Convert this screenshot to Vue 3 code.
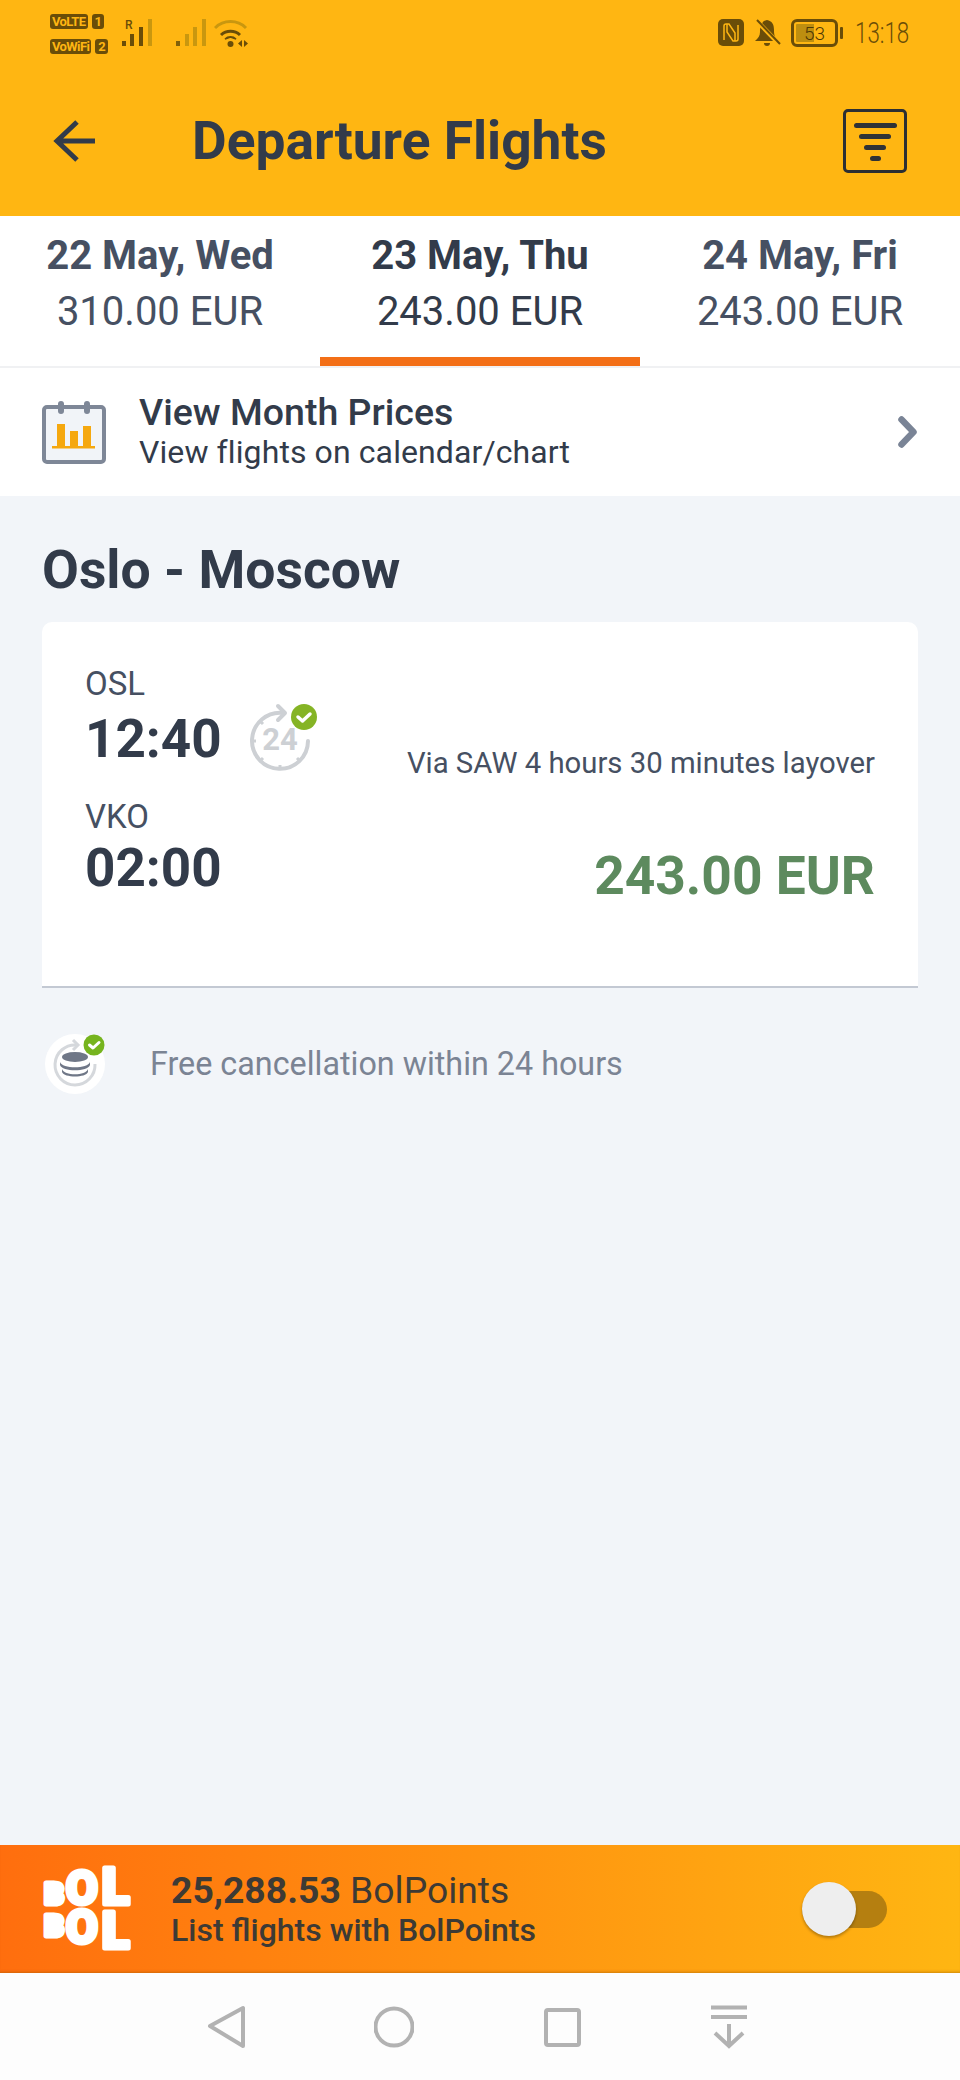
<script setup>
const tabs = [
  { date: '22 May, Wed', price: '310.00 EUR', active: false },
  { date: '23 May, Thu', price: '243.00 EUR', active: true },
  { date: '24 May, Fri', price: '243.00 EUR', active: false },
]
const ticks = [
  [4, 40, 8, 40], [32, 64, 32, 68], [12, 60, 15, 57], [52, 60, 49, 57], [12, 20, 15, 23],
]
</script>

<template>
  <div class="app">
    <header class="top">
      <div class="status">
        <div class="net-labels">
          <div class="net-row"><span class="chip">VoLTE</span><span class="chip num">1</span></div>
          <div class="net-row"><span class="chip">VoWiFi</span><span class="chip num">2</span></div>
        </div>
        <div class="signal first">
          <span class="roam">R</span>
          <svg width="30" height="28" viewBox="0 0 30 28">
            <rect x="0" y="22" width="4" height="5" fill="#6a4d08" />
            <rect x="8" y="15" width="4" height="12" fill="#6a4d08" />
            <rect x="17" y="8" width="4" height="19" fill="#6a4d08" />
            <rect x="26" y="0" width="4" height="27" fill="#c9970f" />
          </svg>
        </div>
        <svg class="signal-two" width="30" height="28" viewBox="0 0 30 28">
          <rect x="0" y="22" width="4" height="5" fill="#80600a" />
          <rect x="9" y="15" width="4" height="12" fill="#c9970f" />
          <rect x="17" y="8" width="4" height="19" fill="#c9970f" />
          <rect x="26" y="0" width="4" height="27" fill="#c9970f" />
        </svg>
        <svg class="wifi" width="36" height="28" viewBox="0 0 36 28">
          <path d="M1 9 A 22 22 0 0 1 32 9" fill="none" stroke="#c9970f" stroke-width="3" />
          <path d="M7 16 A 14 14 0 0 1 26 16" fill="none" stroke="#6a4d08" stroke-width="3" />
          <path d="M11 20 A 8 8 0 0 1 22 20 L 16.500 18 Z" fill="#6a4d08" stroke="#6a4d08" stroke-width="1.500" />
          <circle cx="16.500" cy="25" r="3" fill="#6a4d08" />
          <path d="M28 21 L24 24.500 L28 28 Z M30 21 L34 24.500 L30 28 Z" fill="#6a4d08" />
        </svg>

        <div class="status-right">
          <svg width="26" height="27" viewBox="0 0 26 27">
            <rect x="0" y="0" width="26" height="27" rx="5" fill="#6a4d08" />
            <path d="M6 21 V7 Q6 5 8 5 H11 L17 14 V22 M20 6 V20 Q20 22 18 22 H15 L9 13 V5" fill="none" stroke="#ffb612" stroke-width="1.500" />
          </svg>
          <svg class="bell" width="27" height="28" viewBox="0 0 27 28">
            <path d="M13 1 C 7 2 6 8 6 13 C 6 17 4 19 1 22 H 24 C 20 18 20 14 20 11 C 20 5 18 2 13 1 Z" fill="#6a4d08" />
            <path d="M10 24 H16 A 3 3 0 0 1 10 24 Z" fill="#6a4d08" />
            <path d="M2 1 L26 26" stroke="#ffb612" stroke-width="4.500" />
            <path d="M3 1 L26 25" stroke="#6a4d08" stroke-width="2" />
          </svg>
          <div class="battery"><div class="battery-box"><span>53</span></div><i></i></div>
          <span class="clock">13:18</span>
        </div>
      </div>

      <div class="bar">
        <svg class="back" width="44" height="44" viewBox="0 0 44 44">
          <path d="M42 22 H4 M24 3 L4 22 L24 41" fill="none" stroke="#323b4a" stroke-width="5" />
        </svg>
        <h1>Departure Flights</h1>
        <div class="filter">
          <i class="f1"></i><i class="f2"></i><i class="f3"></i><i class="f4"></i>
        </div>
      </div>
    </header>

    <nav class="tabs">
      <div v-for="t in tabs" :key="t.date" class="tab" :class="{ active: t.active }">
        <div class="tab-date">{{ t.date }}</div>
        <div class="tab-price">{{ t.price }}</div>
      </div>
    </nav>

    <section class="month">
      <svg width="64" height="64" viewBox="0 0 64 64">
        <rect x="2" y="7" width="60" height="55" rx="3" fill="#f1f4f8" stroke="#7e8797" stroke-width="4" />
        <rect x="16" y="1" width="6" height="13" rx="3" fill="#7e8797" />
        <rect x="42" y="1" width="6" height="13" rx="3" fill="#7e8797" />
        <rect x="15" y="24" width="8" height="23" fill="#f5a80f" />
        <rect x="28" y="31" width="8" height="16" fill="#f5a80f" />
        <rect x="41" y="26" width="8" height="21" fill="#f5a80f" />
        <rect x="10" y="46" width="43" height="2.500" fill="#f5a80f" />
      </svg>
      <div class="month-text">
        <div class="month-title">View Month Prices</div>
        <div class="month-sub">View flights on calendar/chart</div>
      </div>
      <svg class="chev" width="20" height="32" viewBox="0 0 20 32">
        <path d="M3.500 3.500 L15.500 16 L3.500 28.500" fill="none" stroke="#7a8496" stroke-width="6.500" stroke-linecap="round" stroke-linejoin="round" />
      </svg>
    </section>

    <main class="main">
      <h2>Oslo - Moscow</h2>
      <article class="card">
        <div class="times">
          <div class="code">OSL</div>
          <div class="time-row">
            <span class="time">12:40</span>
            <svg class="icon24" width="72" height="72" viewBox="0 0 72 72">
              <path d="M35 12 A 28 28 0 1 0 60 40" fill="none" stroke="#cdd0d4" stroke-width="4" stroke-linecap="round" />
              <path d="M30 5 L37 12 L30 19" fill="none" stroke="#cdd0d4" stroke-width="4" stroke-linecap="round" stroke-linejoin="round" />
              <line v-for="(l, i) in ticks" :key="i" :x1="l[0]" :y1="l[1]" :x2="l[2]" :y2="l[3]" stroke="#cdd0d4" stroke-width="3" />
              <text x="32" y="49" text-anchor="middle" class="t24">24</text>
              <circle cx="56" cy="16" r="13" fill="#85b425" />
              <path d="M50 16 L54.500 20 L62 13" fill="none" stroke="#fff" stroke-width="3.500" stroke-linecap="round" stroke-linejoin="round" />
            </svg>
          </div>
          <div class="code code-two">VKO</div>
          <div class="time second">02:00</div>
        </div>
        <div class="fare">
          <div class="via">Via SAW 4 hours 30 minutes layover</div>
          <div class="price">243.00 EUR</div>
        </div>
      </article>

      <div class="free">
        <svg width="64" height="64" viewBox="0 0 64 64">
          <circle cx="31" cy="32" r="30" fill="#fff" />
          <path d="M33 13 A 20 20 0 1 0 51 32" fill="none" stroke="#d5d8dc" stroke-width="3" />
          <path d="M29 8 L34 13 L29 18" fill="none" stroke="#d5d8dc" stroke-width="3" />
          <ellipse cx="31" cy="25" rx="13" ry="5" fill="#6f7787" />
          <path d="M16 30 C 18 37 44 37 46 30 L46 33 C 44 40 18 40 16 33 Z" fill="#6f7787" />
          <path d="M18 37 C 20 44 42 44 44 37 L44 40 C 42 46 20 46 18 40 Z" fill="#6f7787" />
          <circle cx="50" cy="13" r="10.500" fill="#76b41e" />
          <path d="M45.500 13 L49 16 L55 10.500" fill="none" stroke="#fff" stroke-width="3" stroke-linecap="round" stroke-linejoin="round" />
        </svg>
        <span>Free cancellation within 24 hours</span>
      </div>
    </main>

    <section class="points">
      <svg class="logo" width="88" height="86" viewBox="0 0 88 86">
        <text><tspan x="2.500" y="37.500" class="lb">B</tspan><tspan x="24" y="37.500" class="lo">O</tspan><tspan x="60" y="37.500" class="ll">L</tspan></text>
        <text><tspan x="2.500" y="69.500" class="lb">B</tspan><tspan x="24" y="76.500" class="lo">O</tspan><tspan x="60" y="81.500" class="ll">L</tspan></text>
      </svg>
      <div class="points-text">
        <div class="points-amount"><b>25,288.53</b> BolPoints</div>
        <div class="points-sub">List flights with BolPoints</div>
      </div>
      <div class="toggle"><i></i></div>
    </section>

    <footer class="nav">
      <svg width="40" height="46" viewBox="0 0 40 46">
        <path d="M36 4 V42 L3 22 Z" fill="none" stroke="#b2b2b2" stroke-width="4" stroke-linejoin="round" />
      </svg>
      <svg width="40" height="46" viewBox="0 0 40 46">
        <circle cx="20" cy="23" r="18.500" fill="none" stroke="#b2b2b2" stroke-width="4" />
      </svg>
      <svg width="40" height="46" viewBox="0 0 40 46">
        <rect x="5" y="6" width="33" height="35" rx="2" fill="none" stroke="#b2b2b2" stroke-width="4" />
      </svg>
      <svg width="40" height="46" viewBox="0 0 40 46">
        <path d="M3 3.500 H39 M3 13 H39 M21 20 V42 M7 29 L21 42 L35 29" fill="none" stroke="#b2b2b2" stroke-width="4" />
      </svg>
    </footer>
  </div>
</template>

<style scoped>
.app {
  width: 960px;
  height: 2080px;
  display: flex;
  flex-direction: column;
  font-family: Roboto, "Liberation Sans", sans-serif;
  color: #323b4a;
  background: #f2f5f9;
  overflow: hidden;
}
.top {
  height: 216px;
  background: #ffb612;
  flex: none;
}
.status {
  height: 66px;
  display: flex;
  align-items: flex-start;
  padding: 0 51px 0 50px;
  color: #6a4d08;
}
.net-labels {
  padding-top: 14px;
  display: flex;
  flex-direction: column;
  gap: 10px;
  width: 72px;
}
.net-row {
  display: flex;
  gap: 4px;
}
.chip {
  height: 15px;
  line-height: 15px;
  padding: 0 2px;
  background: #6a4d08;
  color: #ffb612;
  font-size: 13px;
  font-weight: 700;
  border-radius: 3px;
  white-space: nowrap;
  letter-spacing: -0.6px;
}
.chip.num {
  padding: 0 3px;
}
.signal {
  display: flex;
  position: relative;
  margin-top: 19px;
}
.roam {
  position: absolute;
  left: 3px;
  top: -1px;
  font-size: 12px;
  font-weight: 500;
  color: #6a4d08;
}
.signal-two {
  margin: 19px 0 0 24px;
}
.wifi {
  margin: 19px 0 0 8px;
}
.status-right {
  margin-left: auto;
  margin-top: 19px;
  display: flex;
  align-items: flex-start;
}
.bell {
  margin-left: 10px;
}
.battery {
  margin-left: 10px;
  display: flex;
  align-items: center;
  gap: 2px;
}
.battery-box {
  width: 47px;
  height: 28px;
  box-sizing: border-box;
  border: 3px solid #6a4d08;
  border-radius: 6px;
  background: linear-gradient(90deg, #bd8e10 0, #bd8e10 49%, transparent 49%);
  background-clip: content-box;
  padding: 2px;
  display: flex;
  align-items: center;
  justify-content: center;
  font-size: 19px;
  font-weight: 300;
  line-height: 1;
  color: #4e3804;
}
.battery i {
  width: 3px;
  height: 12px;
  background: #6a4d08;
  border-radius: 1px;
}
.clock {
  margin-left: 12px;
  width: 54px;
  font-size: 29px;
  line-height: 28px;
  font-weight: 300;
  transform: scaleX(0.77);
  transform-origin: left center;
  white-space: nowrap;
  color: #6a4d08;
}
.bar {
  height: 150px;
  display: flex;
  align-items: center;
  padding: 0 53px;
  box-sizing: border-box;
}
.back {
  flex: none;
}
h1 {
  margin: 0 0 0 95px;
  font-size: 53.300px;
  font-weight: 700;
  line-height: 60px;
  color: #323b4a;
  flex: 1;
}
.filter {
  width: 64px;
  height: 64px;
  box-sizing: border-box;
  border: 3px solid #2c2f33;
  border-radius: 5px;
  display: flex;
  flex-direction: column;
  align-items: center;
  padding-top: 11px;
  gap: 6px;
}
.filter i {
  display: block;
  height: 5px;
  border-radius: 3px;
  background: #2f3236;
}
.f1 { width: 43px; }
.f2 { width: 32px; }
.f3 { width: 22px; }
.f4 { width: 11px; }

.tabs {
  display: flex;
  height: 152px;
  box-sizing: border-box;
  background: #fff;
  border-bottom: 2px solid #f0f1f3;
  flex: none;
}
.tab {
  flex: 1;
  text-align: center;
  padding-top: 12px;
  color: #465062;
  box-sizing: border-box;
}
.tab.active {
  color: #323b4a;
  border-bottom: 9px solid #f36f17;
}
.tab-date {
  font-size: 40px;
  font-weight: 700;
  line-height: 56px;
}
.tab-price {
  font-size: 40px;
  font-weight: 400;
  line-height: 56px;
}
.month {
  height: 128px;
  background: #fff;
  display: flex;
  align-items: center;
  padding: 0 42px;
  flex: none;
}
.month-text {
  margin-left: 33px;
  flex: 1;
}
.month-title {
  font-size: 37.500px;
  font-weight: 500;
  line-height: 40px;
}
.month-sub {
  font-size: 32px;
  line-height: 40px;
  letter-spacing: 0.1px;
}
.chev {
  flex: none;
}
.main {
  flex: 1;
  padding: 50px 42px 0;
}
h2 {
  margin: 0;
  font-size: 53.500px;
  line-height: 48px;
  font-weight: 700;
  color: #323b4a;
}
.card {
  margin-top: 28px;
  height: 366px;
  box-sizing: border-box;
  background: #fff;
  border-radius: 10px 10px 0 0;
  border-bottom: 2px solid #c3c9d3;
  display: flex;
  justify-content: space-between;
  padding: 44px 43px 0 43px;
}
.code {
  font-size: 33px;
  line-height: 36px;
  color: #465062;
}
.code-two {
  margin-top: 30px;
}
.time-row {
  display: flex;
  align-items: center;
  height: 60px;
  margin-top: 7px;
}
.time {
  display: block;
  font-size: 53px;
  font-weight: 700;
  line-height: 60px;
  color: #323b4a;
}
.time.second {
  margin-top: 3px;
}
.icon24 {
  margin: -8px 0 -4px 26px;
  flex: none;
}
.t24 {
  font-family: Roboto, sans-serif;
  font-size: 31px;
  font-weight: 700;
  fill: #cdd0d4;
}
.fare {
  text-align: right;
  padding-top: 77px;
}
.via {
  font-size: 29.300px;
  line-height: 40px;
  color: #465062;
}
.price {
  margin-top: 63px;
  font-size: 53.300px;
  font-weight: 700;
  line-height: 60px;
  color: #5d8a5e;
}
.free {
  margin-top: 44px;
  display: flex;
  align-items: center;
  padding-left: 2px;
  color: #7b8494;
  font-size: 32.300px;
}
.free span {
  margin-left: 42px;
}
.points {
  height: 128px;
  flex: none;
  box-sizing: border-box;
  background: linear-gradient(90deg, #ff6e0e 0%, #ffb612 100%);
  box-shadow: inset 0 -3px 3px -2px rgba(160, 90, 0, 0.5);
  display: flex;
  align-items: center;
  padding: 0 73px 0 42px;
}
.logo {
  flex: none;
  overflow: visible;
}
.logo text {
  font-family: Roboto, sans-serif;
  fill: #fff;
  stroke: #fff;
  stroke-width: 5px;
  stroke-linejoin: round;
}
.lb { font-size: 30px; font-weight: 900; }
.lo { font-size: 46px; font-weight: 700; }
.ll { font-size: 50px; font-weight: 900; }
.points-text {
  margin-left: 41px;
  flex: 1;
  color: #3d3a35;
}
.points-amount {
  font-size: 37.300px;
  line-height: 42px;
}
.points-amount b {
  font-weight: 700;
}
.points-sub {
  font-size: 32px;
  font-weight: 500;
  line-height: 38px;
}
.toggle {
  width: 85px;
  height: 37px;
  border-radius: 19px;
  background: #b57f10;
  display: flex;
  align-items: center;
}
.toggle i {
  display: block;
  width: 54px;
  height: 54px;
  border-radius: 50%;
  background: #eeeeee;
  box-shadow: 0 2px 3px rgba(0, 0, 0, 0.3);
}
.nav {
  flex: none;
  height: 107px;
  box-sizing: border-box;
  background: #fdfdfd;
  display: flex;
  align-items: center;
  gap: 127px;
  padding: 0 0 0 207px;
}
</style>
